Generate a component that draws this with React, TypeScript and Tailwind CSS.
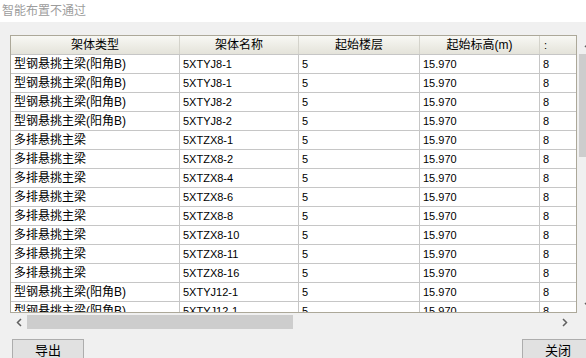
import React from "react";

const rows: [string, string][] = [
  ["型钢悬挑主梁(阳角B)", "5XTYJ8-1"],
  ["型钢悬挑主梁(阳角B)", "5XTYJ8-1"],
  ["型钢悬挑主梁(阳角B)", "5XTYJ8-2"],
  ["型钢悬挑主梁(阳角B)", "5XTYJ8-2"],
  ["多排悬挑主梁", "5XTZX8-1"],
  ["多排悬挑主梁", "5XTZX8-2"],
  ["多排悬挑主梁", "5XTZX8-4"],
  ["多排悬挑主梁", "5XTZX8-6"],
  ["多排悬挑主梁", "5XTZX8-8"],
  ["多排悬挑主梁", "5XTZX8-10"],
  ["多排悬挑主梁", "5XTZX8-11"],
  ["多排悬挑主梁", "5XTZX8-16"],
  ["型钢悬挑主梁(阳角B)", "5XTYJ12-1"],
  ["型钢悬挑主梁(阳角B)", "5XTYJ12-1"],
];

const cell = "h-full flex items-center px-[3px] border-r border-[#c6c6c6] overflow-hidden whitespace-nowrap";
const head = "h-full flex items-center justify-center border-r border-[#d4d3cb] overflow-hidden whitespace-nowrap";

export default function App() {
  return (
    <div className="w-[586px] h-[358px] overflow-hidden bg-[#f0f0f0] text-black font-['Liberation_Sans','Noto_Sans_CJK_SC',sans-serif]">
      <div className="h-[22px] bg-white px-[2px] text-[12px] leading-[23px] text-[#9c9c9c]">智能布置不通过</div>

      <div className="flex pt-[13px] pl-[10px]">
        {/* grid */}
        <div className="w-[567px] h-[278px] flex-none overflow-hidden border border-[#aca899] bg-white">
          <div className="flex h-[19px] border-b border-[#c6c6c6] bg-gradient-to-b from-[#f8f8f4] to-[#e4e3da] text-[12px]">
            <div className={`${head} w-[169px] flex-none`}>架体类型</div>
            <div className={`${head} w-[119px] flex-none`}>架体名称</div>
            <div className={`${head} w-[121px] flex-none`}>起始楼层</div>
            <div className={`${head} w-[120px] flex-none`}>起始标高(m)</div>
            <div className="h-full flex items-center pl-[4px] flex-1 text-[11px]">:</div>
          </div>
          {rows.map(([type, name], i) => (
            <div key={i} className="flex h-[19px] flex-none border-b border-[#c6c6c6] text-[11px]">
              <div className={`${cell} w-[169px] flex-none text-[12px]`}>{type}</div>
              <div className={`${cell} w-[119px] flex-none`}>{name}</div>
              <div className={`${cell} w-[121px] flex-none`}>5</div>
              <div className={`${cell} w-[120px] flex-none`}>15.970</div>
              <div className="h-full flex items-center px-[3px] flex-1">8</div>
            </div>
          ))}
        </div>

        {/* vertical scrollbar */}
        <div className="w-[17px] h-[278px] flex-none flex flex-col items-start pl-[2px]">
          <div className="h-[19px] w-full flex items-center justify-center">
            <svg width="9" height="6" viewBox="0 0 9 6" className="ml-[4px]">
              <path d="M1 5 L4.5 1.5 L8 5" stroke="#606060" strokeWidth="1.5" fill="none" />
            </svg>
          </div>
          <div className="w-[13px] h-[103px] bg-[#cdcdcd]" />
          <div className="flex-1" />
          <div className="h-[16px] w-full flex items-center justify-center">
            <svg width="9" height="6" viewBox="0 0 9 6" className="ml-[4px]">
              <path d="M1 1 L4.5 4.5 L8 1" stroke="#606060" strokeWidth="1.5" fill="none" />
            </svg>
          </div>
        </div>
      </div>

      {/* horizontal scrollbar */}
      <div className="flex items-center h-[16px] ml-[10px] w-[567px] mt-[1px]">
        <div className="w-[17px] h-full flex items-center justify-center">
          <svg width="6" height="9" viewBox="0 0 6 9">
            <path d="M5 1 L1.5 4.5 L5 8" stroke="#606060" strokeWidth="1.5" fill="none" />
          </svg>
        </div>
        <div className="w-[266px] h-[14px] bg-[#cdcdcd]" />
        <div className="flex-1" />
        <div className="w-[17px] h-full flex items-center justify-center mr-[4px]">
          <svg width="6" height="9" viewBox="0 0 6 9">
            <path d="M1 1 L4.5 4.5 L1 8" stroke="#606060" strokeWidth="1.5" fill="none" />
          </svg>
        </div>
      </div>

      {/* buttons */}
      <div className="flex justify-between mt-[9px] pl-[12px] pr-0">
        <button className="w-[72px] h-[23px] border border-[#adadad] bg-[#e1e1e1] text-[13px] leading-none">导出</button>
        <button className="w-[72px] h-[23px] border border-[#adadad] bg-[#e1e1e1] text-[13px] leading-none -mr-[8px]">关闭</button>
      </div>
    </div>
  );
}
